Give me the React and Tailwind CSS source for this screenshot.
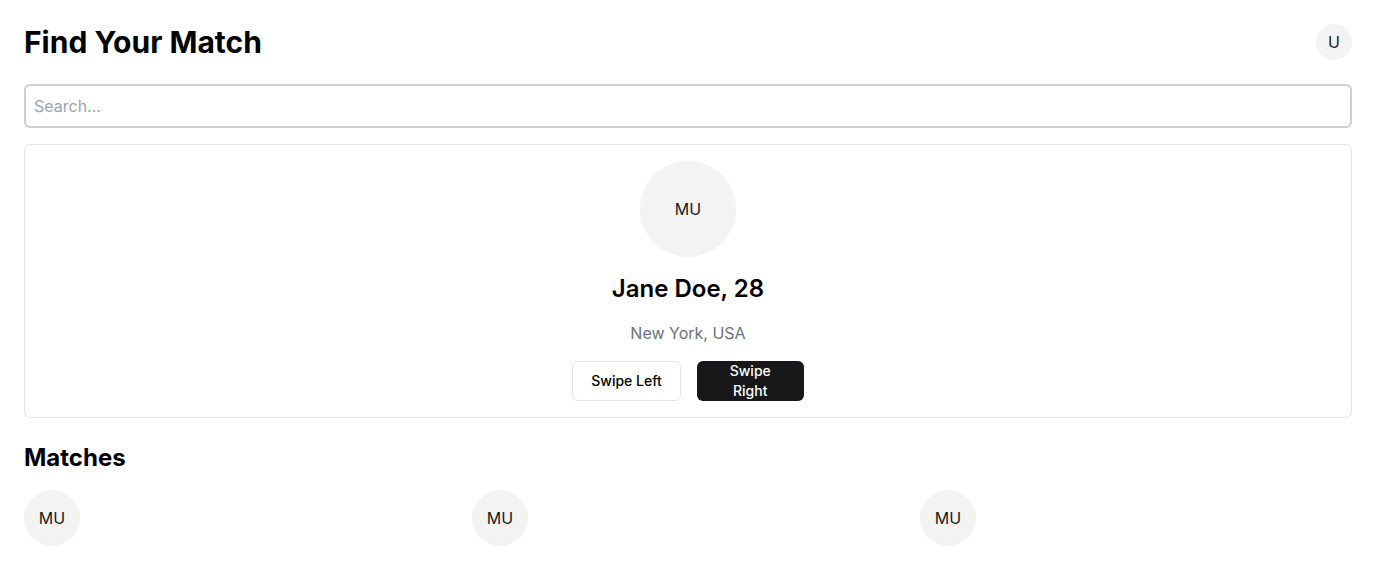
export default function App() {
  const matches = [1, 2, 3];

  return (
    <div className="min-h-screen bg-white p-6 text-black font-['Inter',sans-serif]">
      <header className="flex items-center justify-between mb-6">
        <h1 className="text-3xl font-bold">Find Your Match</h1>
        <div className="w-9 h-9 rounded-full bg-[#f3f3f3] flex items-center justify-center text-base text-[#1a1a1a]">
          U
        </div>
      </header>

      <input
        type="text"
        placeholder="Search..."
        className="w-full h-11 border-2 border-[#cfcfd3] rounded-md px-2 text-base placeholder:text-[#9ca3af] outline-none mb-4"
      />

      <section className="border border-[#e5e5e5] rounded-md p-4 flex flex-col items-center gap-4">
        <div className="w-24 h-24 rounded-full bg-[#f3f3f3] flex items-center justify-center text-base text-[#1a1a1a]">
          MU
        </div>
        <h2 className="text-2xl font-semibold">Jane Doe, 28</h2>
        <p className="text-base text-[#6b7280]">New York, USA</p>
        <div className="flex gap-4">
          <button className="h-10 px-[18px] border border-[#e5e5e5] rounded-md bg-white text-sm font-medium">
            Swipe Left
          </button>
          <button className="h-10 w-[107px] px-4 rounded-md bg-[#18181b] text-white text-sm font-medium leading-5">
            Swipe Right
          </button>
        </div>
      </section>

      <h2 className="text-2xl font-bold mt-6 mb-4">Matches</h2>

      <div className="grid grid-cols-3 gap-4">
        {matches.map((m) => (
          <div key={m}>
            <div className="w-14 h-14 rounded-full bg-[#f3f3f3] flex items-center justify-center text-base text-[#1a1a1a]">
              MU
            </div>
          </div>
        ))}
      </div>
    </div>
  );
}
